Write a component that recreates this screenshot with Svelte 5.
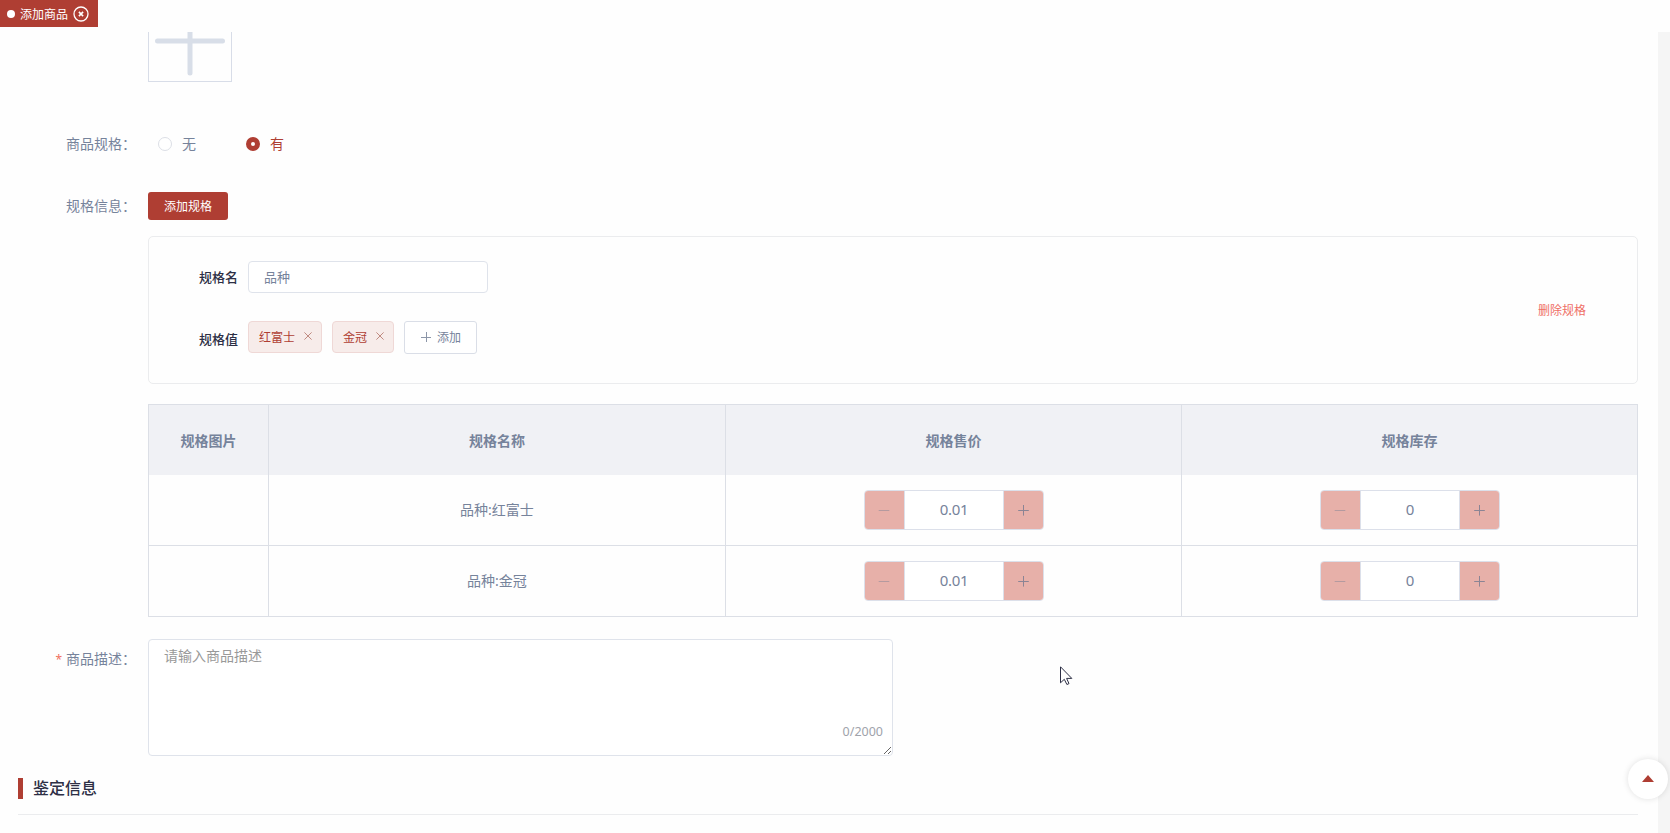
<script lang="ts">
  interface Row {
    name: string;
    price: string;
    stock: string;
  }

  let hasSpec = $state('yes');
  let specName = $state('品种');
  let desc = $state('');
  let values = $state(['红富士', '金冠']);

  const rows: Row[] = $derived(
    values.map((v) => ({ name: `${specName}:${v}`, price: '0.01', stock: '0' }))
  );

  function removeValue(i: number) {
    values.splice(i, 1);
  }
</script>

{#snippet stepper(value: string)}
  <div class="stepper">
    <button class="step minus" aria-label="-">
      <svg width="12" height="12" viewBox="0 0 12 12"><path d="M.7 6.5h10.6" /></svg>
    </button>
    <input type="text" {value} />
    <button class="step plus" aria-label="+">
      <svg width="12" height="12" viewBox="0 0 12 12"><path d="M.2 6.5h10.6M5.5 1v10.6" /></svg>
    </button>
  </div>
{/snippet}

<div class="page">
  <nav class="tags-bar">
    <div class="view-tag">
      <i class="dot"></i>
      <span>添加商品</span>
      <svg width="16" height="16" viewBox="0 0 16 16">
        <circle cx="8" cy="8" r="7" />
        <path d="M5.9 5.9l4.2 4.2M10.1 5.9l-4.2 4.2" />
      </svg>
    </div>
  </nav>

  <div class="scroll-area">
    <main class="content">
      <div class="form-item upload-item">
        <div class="label"></div>
        <div class="upload">
          <svg width="82" height="82" viewBox="0 0 82 82"><path d="M8.5 42h65M41 9v65" /></svg>
        </div>
      </div>

      <div class="form-item radio-item">
        <div class="label">商品规格：</div>
        <div class="radios">
          <label class:checked={hasSpec === 'no'}>
            <input type="radio" value="no" bind:group={hasSpec} />无
          </label>
          <label class:checked={hasSpec === 'yes'}>
            <input type="radio" value="yes" bind:group={hasSpec} />有
          </label>
        </div>
      </div>

      <div class="form-item spec-item">
        <div class="label">规格信息：</div>
        <div class="field">
          <button class="btn-primary">添加规格</button>

          <section class="spec-card">
            <div class="spec-body">
              <div class="spec-line">
                <b>规格名</b>
                <input class="name-input" type="text" bind:value={specName} />
              </div>
              <div class="spec-line values">
                <b>规格值</b>
                {#each values as v, i (v)}
                  <span class="value-tag">
                    {v}
                    <button aria-label="删除" onclick={() => removeValue(i)}>
                      <svg width="8" height="8" viewBox="0 0 8 8"><path d="M.4.4l7.2 7.2M7.6.4L.4 7.6" /></svg>
                    </button>
                  </span>
                {/each}
                <button class="btn-add">
                  <svg width="10" height="10" viewBox="0 0 10 10"><path d="M0 5.5h10M5.5 0v10" /></svg>
                  添加
                </button>
              </div>
            </div>
            <button class="btn-text">删除规格</button>
          </section>

          <table>
            <colgroup>
              <col class="col-img" />
              <col class="col-name" />
              <col /><col />
            </colgroup>
            <thead>
              <tr>
                <th>规格图片</th>
                <th>规格名称</th>
                <th>规格售价</th>
                <th>规格库存</th>
              </tr>
            </thead>
            <tbody>
              {#each rows as row (row.name)}
                <tr>
                  <td></td>
                  <td class="name">{row.name}</td>
                  <td>{@render stepper(row.price)}</td>
                  <td>{@render stepper(row.stock)}</td>
                </tr>
              {/each}
            </tbody>
          </table>
        </div>
      </div>

      <div class="form-item desc-item">
        <div class="label"><em>*</em>商品描述：</div>
        <div class="textarea-wrap">
          <textarea placeholder="请输入商品描述" maxlength="2000" bind:value={desc}></textarea>
          <span class="count">{desc.length}/2000</span>
        </div>
      </div>

      <h3 class="section-title">鉴定信息</h3>
    </main>
    <div class="gutter"></div>
  </div>

  <button class="backtop" aria-label="回到顶部"><i></i></button>

  <svg class="pointer" width="13" height="20" viewBox="0 0 13 20">
    <path d="M.5.8v16l3.8-3.5 2.6 5.2 2.1-.9-2.4-5.2h5.2z" />
  </svg>
</div>

<style>
  :global(body) {
    background: #fefefe;
  }

  .page {
    position: relative;
    display: flex;
    flex-direction: column;
    height: 833px;
    overflow: hidden;
    background: #fefefe;
    color: #76839b;
    font-family: 'Noto Sans', 'Noto Sans CJK SC', sans-serif;
    font-size: 14px;
  }

  .page :global(*) {
    box-sizing: border-box;
  }

  button,
  input,
  textarea {
    margin: 0;
    padding: 0;
    font-family: inherit;
    outline: none;
  }

  svg {
    display: block;
    fill: none;
    flex-shrink: 0;
  }

  .tags-bar {
    flex: 0 0 32px;
    display: flex;
    align-items: flex-start;
  }

  .view-tag {
    display: flex;
    align-items: center;
    width: 98px;
    height: 27px;
    padding-left: 7px;
    background: #af3e33;
    color: #fff;
    font-size: 12px;
    white-space: nowrap;
  }

  .view-tag .dot {
    width: 8px;
    height: 8px;
    margin-right: 5px;
    border-radius: 50%;
    background: #fff;
  }

  .view-tag svg {
    margin-left: 4.5px;
    stroke: #fff;
    stroke-width: 1.3;
  }

  .view-tag path {
    stroke-width: 1.6;
  }

  .scroll-area {
    flex: 1;
    display: flex;
    min-height: 0;
  }

  .content {
    flex: 1;
    min-width: 0;
    padding: 0 20px 0 18px;
    overflow: hidden;
  }

  .gutter {
    width: 12px;
    background: #f5f5f5;
  }

  .form-item {
    display: flex;
  }

  .label {
    flex: 0 0 130px;
    padding-right: 12px;
    text-align: right;
    white-space: nowrap;
  }

  .label em {
    margin-right: 4px;
    color: #f0705f;
    font-size: 12px;
    font-style: normal;
  }

  .field {
    flex: 1;
    min-width: 0;
  }

  .upload-item {
    height: 50px;
    align-items: flex-end;
    overflow: hidden;
  }

  .upload {
    width: 84px;
    height: 84px;
    border: 1px solid #d8dde8;
  }

  .upload svg {
    stroke: #d8dee8;
    stroke-width: 5;
    stroke-linecap: round;
  }

  .radio-item {
    margin-top: 42px;
    line-height: 40px;
  }

  .radios {
    display: flex;
    padding-left: 10px;
  }

  .radios label {
    display: flex;
    align-items: center;
    width: 88px;
  }

  .radios input {
    appearance: none;
    width: 14px;
    height: 14px;
    margin-right: 10px;
    border: 1px solid #dcdfe6;
    border-radius: 50%;
    background: #fff;
  }

  .radios .checked {
    color: #af3e33;
  }

  .radios .checked input {
    border: 5px solid #af3e33;
  }

  .spec-item {
    margin-top: 28px;
  }

  .spec-item > .label {
    line-height: 28px;
  }

  .btn-primary {
    display: block;
    width: 80px;
    height: 28px;
    border: 0;
    border-radius: 3px;
    background: #af3e33;
    color: #fff;
    font-size: 12px;
  }

  .spec-card {
    display: flex;
    align-items: center;
    justify-content: space-between;
    height: 148px;
    margin: 16px 0 20px;
    padding: 0 51px 0 50px;
    border: 1px solid #ebecee;
    border-radius: 5px;
  }

  .spec-body {
    padding-bottom: 5px;
  }

  .spec-line {
    display: flex;
    align-items: center;
    height: 32px;
  }

  .spec-line b {
    margin-right: 10px;
    padding-bottom: 2px;
    color: #2d2f45;
    font-size: 13px;
    font-weight: 500;
  }

  .spec-line.values {
    align-items: flex-start;
    height: 33px;
    margin-top: 28px;
  }

  .spec-line.values b {
    padding-bottom: 0;
    line-height: 36px;
  }

  .name-input {
    width: 240px;
    height: 32px;
    padding: 0 15px 2px;
    border: 1px solid #dfe3eb;
    border-radius: 4px;
    background: #fff;
    color: #76839b;
    font-size: 13px;
  }

  .value-tag {
    display: flex;
    align-items: center;
    height: 32px;
    margin-right: 10px;
    padding: 0 9px 0 10px;
    border: 1px solid #efd8d6;
    border-radius: 4px;
    background: #f7ecea;
    color: #af3e33;
    font-size: 12px;
  }

  .value-tag button {
    margin-left: 9px;
    padding-bottom: 2px;
    border: 0;
    background: none;
  }

  .value-tag svg {
    stroke: #c08a80;
  }

  .btn-add {
    display: flex;
    align-items: center;
    gap: 6px;
    width: 73px;
    height: 33px;
    padding: 0 0 1px 16px;
    border: 1px solid #dadee7;
    border-radius: 3px;
    background: #fff;
    color: #76839b;
    font-size: 12px;
  }

  .btn-add svg {
    stroke: #8c96a8;
  }

  .btn-text {
    border: 0;
    background: none;
    color: #ef6f66;
    font-size: 12px;
  }

  table {
    width: 100%;
    table-layout: fixed;
    border-collapse: separate;
    border-spacing: 0;
    border: 1px solid #dcdfe6;
    border-width: 1px 0 0 1px;
  }

  .col-img {
    width: 120px;
  }

  .col-name {
    width: 457px;
  }

  th,
  td {
    height: 71px;
    padding: 0 0 0 1px;
    border-right: 1px solid #dcdfe6;
    border-bottom: 1px solid #dcdfe6;
    text-align: center;
  }

  th {
    height: 70px;
    padding: 0;
    border-bottom: 0;
    background: #f0f1f5;
    font-weight: 700;
  }

  td.name {
    padding: 0 0 2px;
  }

  .stepper {
    display: flex;
    width: 180px;
    height: 40px;
    margin: 0 auto;
    border: 1px solid #dce0ea;
    border-radius: 4px;
    overflow: hidden;
  }

  .stepper input {
    flex: 1;
    min-width: 0;
    padding-bottom: 2px;
    border: 0;
    background: #fff;
    color: #76839b;
    font-size: 15px;
    letter-spacing: -0.3px;
    text-align: center;
  }

  .step {
    display: flex;
    align-items: center;
    justify-content: center;
    width: 40px;
    border: 0;
    background: #e7b0a9;
  }

  .step svg {
    stroke: #8b8494;
  }

  .minus {
    padding-right: 1px;
    border-right: 1px solid #dce0ea;
  }

  .minus svg {
    stroke: #b59a9f;
  }

  .plus {
    border-left: 1px solid #dce0ea;
  }

  .desc-item {
    margin-top: 22px;
  }

  .desc-item .label {
    line-height: 40px;
  }

  .textarea-wrap {
    position: relative;
    width: 745px;
    height: 117px;
  }

  textarea {
    display: block;
    width: 100%;
    height: 100%;
    padding: 5px 15px;
    border: 1px solid #dfe3eb;
    border-radius: 4px;
    background: #fff;
    color: #76839b;
    font-size: 14px;
    line-height: 22px;
  }

  textarea::placeholder {
    color: #999;
  }

  .count {
    position: absolute;
    right: 10px;
    bottom: 15px;
    color: #a0a3ab;
    font-size: 12.5px;
    line-height: 18px;
  }

  .section-title {
    display: flex;
    align-items: center;
    height: 37px;
    margin: 22px 0 0;
    padding-bottom: 15px;
    border-bottom: 1px solid #ebecee;
    color: #2d2f45;
    font-size: 16px;
    font-weight: 500;
    line-height: 23px;
  }

  .section-title::before {
    content: '';
    width: 5px;
    height: 21px;
    margin-right: 10px;
    background: #af3e33;
  }

  .backtop {
    position: absolute;
    right: 2px;
    bottom: 34px;
    display: flex;
    align-items: center;
    justify-content: center;
    width: 40px;
    height: 40px;
    padding-bottom: 2px;
    border: 0;
    border-radius: 50%;
    background: #fff;
    box-shadow: 0 0 6px rgba(0, 0, 0, 0.12);
  }

  .backtop i {
    border: 6px solid transparent;
    border-top: 0;
    border-bottom: 7px solid #af3e33;
  }

  .pointer {
    position: absolute;
    left: 1060px;
    top: 666px;
    fill: #fff;
    stroke: #2d2f45;
  }
</style>
